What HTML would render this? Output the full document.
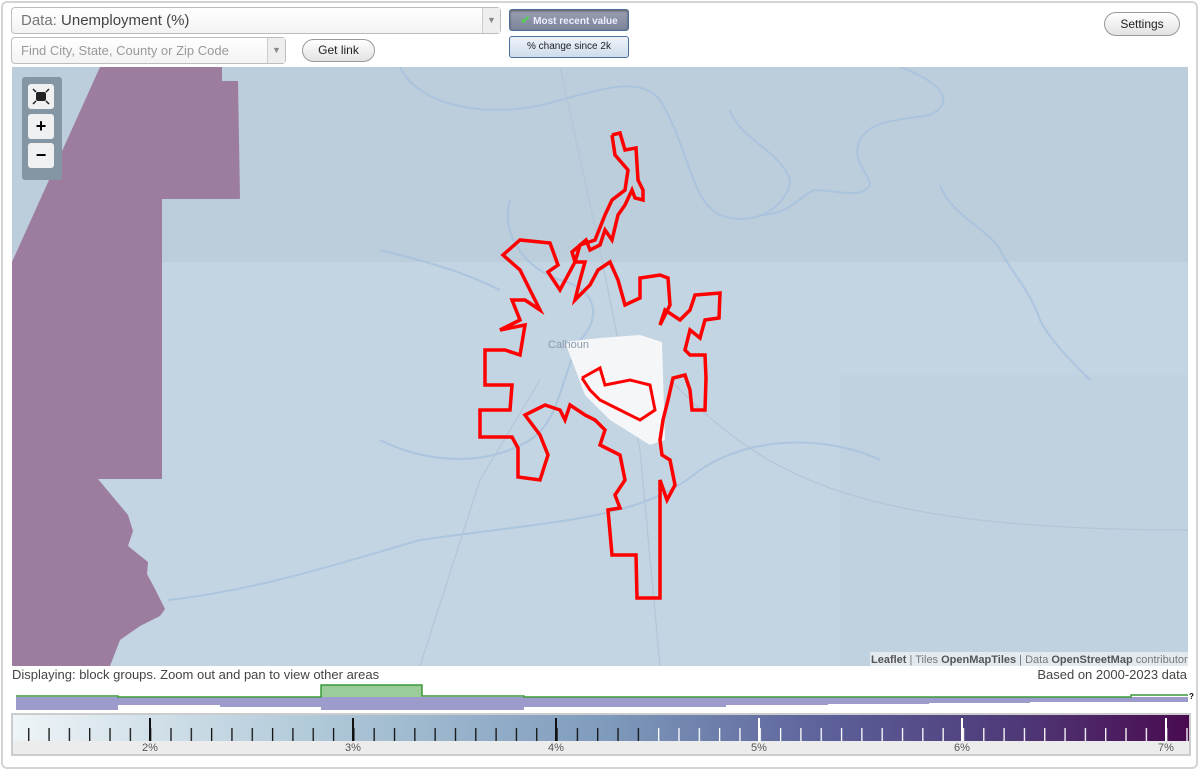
<!DOCTYPE html>
<html><head><meta charset="utf-8"><style>
*{box-sizing:border-box}
body{margin:0;width:1200px;height:771px;background:#fff;font-family:"Liberation Sans",Arial,sans-serif;overflow:hidden;position:relative}
.frame{position:absolute;left:1px;top:1px;width:1197px;height:768px;border:2px solid #d4d4d4;border-radius:6px}
.sel{position:absolute;border:1px solid #bdbdbd;border-radius:4px;background:linear-gradient(#fff,#f3f3f3);color:#444}
.sel .arr{position:absolute;right:0;top:0;bottom:0;width:18px;border-left:1px solid #ccc;background:#eee;color:#888;font-size:9px;text-align:center}
.btn{position:absolute;border:1px solid #999;border-radius:12px;background:linear-gradient(#fff,#e2e2e2);font-size:12px;color:#222;text-align:center}
.tb{position:absolute;border:1px solid #4a6f9a;border-radius:3px;font-size:10px;text-align:center}
</style></head><body>
<div class="frame"></div>
<div class="sel" style="left:11px;top:7px;width:490px;height:27px;font-size:15px;line-height:25px;padding-left:9px"><span style="color:#777">Data:</span> Unemployment (%)<div class="arr" style="line-height:25px">▼</div></div>
<div class="sel" style="left:11px;top:37px;width:275px;height:27px;font-size:13px;line-height:25px;padding-left:9px;color:#999">Find City, State, County or Zip Code<div class="arr" style="line-height:25px">▼</div></div>
<div class="btn" style="left:302px;top:39px;width:73px;height:23px;line-height:21px">Get link</div>
<div class="tb" style="left:509px;top:9px;width:120px;height:22px;line-height:20px;background:linear-gradient(#9aa0b2,#7d8499);color:#eef;font-weight:bold;box-shadow:inset 0 1px 2px #555"><span style="color:#5c5;font-size:12px">✔</span> Most recent value</div>
<div class="tb" style="left:509px;top:36px;width:120px;height:22px;line-height:20px;background:linear-gradient(#eef3fa,#cfdcec);color:#222">% change since 2k</div>
<div class="btn" style="left:1104px;top:12px;width:76px;height:24px;line-height:22px">Settings</div>

<svg style="position:absolute;left:12px;top:67px" width="1176" height="599" viewBox="12 67 1176 599">
<rect x="12" y="67" width="1176" height="599" fill="#c3d4e2"/>
<rect x="12" y="67" width="1176" height="195" fill="#bccddb"/>
<rect x="840" y="375" width="348" height="291" fill="#c0d1df"/>
<g fill="none" stroke="#a6c2de" stroke-width="2" opacity="0.8">
<path d="M400 67 C420 110,500 120,560 100 C600 90,640 75,660 100 C690 150,690 200,720 215 C760 230,790 200,790 180 C780 150,740 140,730 110"/>
<path d="M510 200 C500 240,530 270,560 280 C600 290,600 320,580 340 C560 380,560 420,530 440 C480 470,420 460,380 440"/>
<path d="M900 67 C935 80,960 100,930 115 C900 120,870 120,860 140 C850 160,870 175,870 185 C860 200,840 190,815 190 C800 195,790 215,760 215"/>
<path d="M940 185 C950 215,990 230,1000 250 C1010 270,1030 290,1040 320 C1050 340,1070 360,1090 380"/>
<path d="M380 250 C420 260,460 270,500 290"/>
<path d="M168 600 C260 590,350 560,420 540 C560 520,640 520,700 470 C760 430,840 440,880 460"/>
</g>
<g fill="none" stroke="#b3c6d8" stroke-width="1.2">
<path d="M560 67 L600 250 L640 450 L660 666"/><path d="M670 380 C760 470,840 530,1188 530"/><path d="M420 666 L480 480 L540 380"/>
</g>
<polygon fill="#9b7a9e" opacity="0.97" points="100,67 222,67 222,81 238,81 240,199 162,199 162,479 98,479 128,515 133,531 128,546 148,562 147,574 155,589 165,609 160,616 140,626 120,640 110,666 12,666 12,262"/>
<polygon fill="#f4f6f8" points="565,342 600,338 640,335 662,342 665,440 650,445 610,420 585,395"/>
<text x="548" y="348" font-size="11" fill="#8a9aac" font-family="Liberation Sans">Calhoun</text>
<polyline fill="none" stroke="#ff0000" stroke-width="3.5" stroke-linejoin="miter" points="612,135 620,133 625,150 636,148 638,180 643,190 643,200 635,198 632,190 625,205 618,215 612,240 605,230 600,245 590,250 586,240 572,252 575,262 585,262 580,280 575,300 590,285 598,270 610,262 618,280 625,305 640,298 640,278 660,275 668,278 670,305 660,325 665,310 680,320 690,310 695,295 720,293 719,318 705,320 700,338 690,330 685,350 690,355 705,355 706,378 705,410 692,410 690,390 685,375 673,378 668,400 663,420 660,440 662,455 670,460 675,485 667,500 660,480 660,598 637,598 636,555 612,555 608,510 620,508 615,495 625,480 620,455 610,450 600,445 605,430 595,420 585,415 570,405 565,420 560,410 545,405 525,415 540,435 548,455 540,480 518,477 518,448 512,437 480,437 480,410 510,410 512,385 485,385 485,350 505,350 520,355 525,325 500,330 520,320 512,300 525,300 540,310 520,270 503,255 520,240 550,243 558,265 548,272 560,290 575,262 580,245 595,240 605,215 612,200 625,190 628,170 615,155 612,135"/>
<polyline fill="none" stroke="#ff0000" stroke-width="3" points="582,378 600,368 605,385 630,380 650,385 655,410 640,420 620,410 600,400 590,390 582,378"/>
<rect x="870" y="652" width="318" height="14" fill="#e8eef3" opacity="0.85"/>
<text x="871" y="663" font-size="11" font-family="Liberation Sans" fill="#777"><tspan fill="#555" font-weight="bold">Leaflet</tspan> | Tiles <tspan fill="#555" font-weight="bold">OpenMapTiles</tspan> | Data <tspan fill="#555" font-weight="bold">OpenStreetMap</tspan> contributors</text>
</svg>
<div style="position:absolute;left:22px;top:77px;width:40px;height:103px;background:#8495a3;border-radius:3px"></div>
<div style="position:absolute;left:28px;top:84px;width:26px;height:25px;background:#eef0f2;border-radius:3px">
<svg width="26" height="25"><rect x="8" y="8" width="10" height="9" rx="2" fill="#222"/><path d="M5 5l3 3M21 5l-3 3M5 20l3-3M21 20l-3-3" stroke="#222" stroke-width="1.5"/></svg></div>
<div style="position:absolute;left:28px;top:114px;width:26px;height:25px;background:#eef0f2;border-radius:3px;text-align:center;font-weight:bold;font-size:18px;line-height:24px">+</div>
<div style="position:absolute;left:28px;top:143px;width:26px;height:25px;background:#eef0f2;border-radius:3px;text-align:center;font-weight:bold;font-size:18px;line-height:24px">−</div>

<div style="position:absolute;left:12px;top:667px;font-size:13px;color:#444">Displaying: block groups. Zoom out and pan to view other areas</div>
<div style="position:absolute;right:13px;top:667px;font-size:13px;color:#444">Based on 2000-2023 data</div>

<svg style="position:absolute;left:0;top:680px" width="1200" height="34">
<g fill="#9d9bcc">
<rect x="16" y="17" width="102" height="13"/><rect x="118" y="17" width="102" height="8"/><rect x="220" y="17" width="101" height="10"/><rect x="321" y="17" width="101" height="13"/><rect x="422" y="17" width="102" height="13"/><rect x="524" y="17" width="101" height="10"/><rect x="625" y="17" width="101" height="10"/><rect x="726" y="17" width="102" height="8"/><rect x="828" y="17" width="101" height="7"/><rect x="929" y="17" width="101" height="6"/><rect x="1030" y="17" width="101" height="5"/><rect x="1131" y="17" width="57" height="5"/>
</g>
<rect x="321" y="5" width="101" height="12" fill="#9ccc9a"/>
<polyline fill="none" stroke="#3a9a3a" stroke-width="1.5" points="16,16 118,16 118,17 321,17 321,5 422,5 422,16 524,16 524,17 1131,17 1131,15 1188,15"/>
<text x="1189" y="19" font-size="8" font-weight="bold">?</text>
</svg>

<div style="position:absolute;left:11px;top:713px;width:1180px;height:43px;border:2px solid #ccc;background:#ececec"></div>
<svg style="position:absolute;left:13px;top:715px" width="1176" height="39" viewBox="13 715 1176 39">
<defs>
<linearGradient id="g" x1="0" x2="1"><stop offset="0" stop-color="#eef4f7"/><stop offset="0.25" stop-color="#b2cad9"/><stop offset="0.5" stop-color="#7f9cbd"/><stop offset="0.7" stop-color="#5b5e98"/><stop offset="0.85" stop-color="#4f3a78"/><stop offset="1" stop-color="#4a0a50"/></linearGradient>
<pattern id="pb" patternUnits="userSpaceOnUse" x="28.1" y="0" width="20.32" height="2000"><rect x="0" y="0" width="1.3" height="2000" fill="#111"/></pattern>
<pattern id="pw" patternUnits="userSpaceOnUse" x="28.1" y="0" width="20.32" height="2000"><rect x="0" y="0" width="1.3" height="2000" fill="#fff"/></pattern>
</defs>
<rect x="13" y="715" width="1176" height="26" fill="url(#g)"/>
<rect x="13" y="728" width="634" height="13" fill="url(#pb)"/>
<rect x="647" y="728" width="542" height="13" fill="url(#pw)"/>
<g fill="#111"><rect x="149" y="718" width="2" height="23"/><rect x="352" y="718" width="2" height="23"/><rect x="555" y="718" width="2" height="23"/></g>
<g fill="#fff"><rect x="758" y="718" width="2" height="23"/><rect x="961" y="718" width="2" height="23"/><rect x="1165" y="718" width="2" height="23"/></g>
<g font-size="11" fill="#555" font-family="Liberation Sans" text-anchor="middle"><text x="150" y="751">2%</text><text x="353" y="751">3%</text><text x="556" y="751">4%</text><text x="759" y="751">5%</text><text x="962" y="751">6%</text><text x="1166" y="751">7%</text></g>
</svg>
</body></html>
